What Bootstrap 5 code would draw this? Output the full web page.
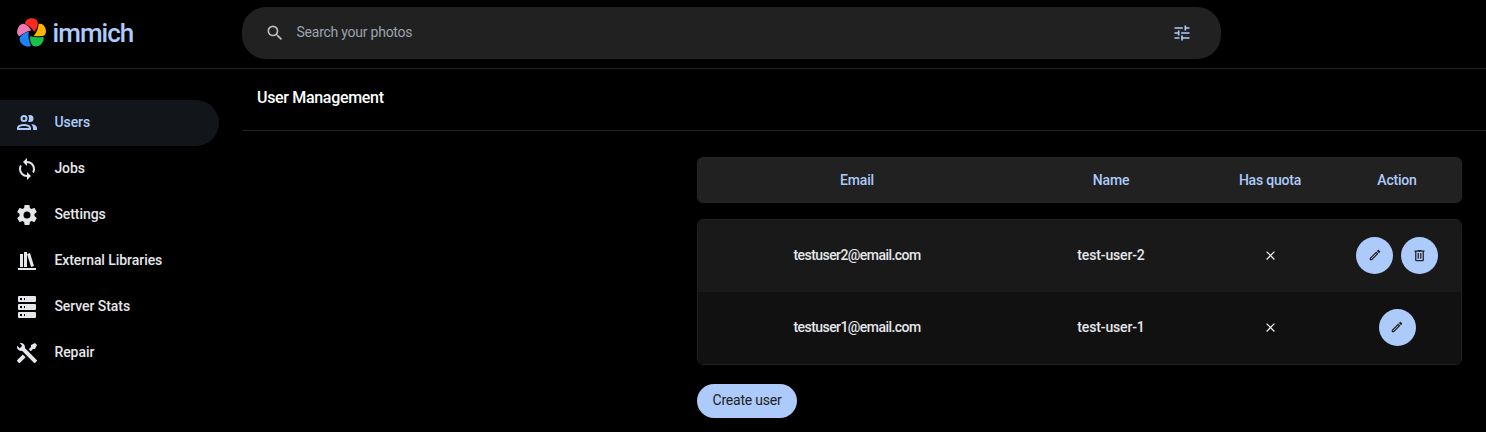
<!DOCTYPE html>
<html lang="en" data-bs-theme="dark">
<head>
<meta charset="utf-8">
<meta name="viewport" content="width=device-width, initial-scale=1">
<title>User Management - Immich</title>
<link rel="stylesheet" href="https://cdn.jsdelivr.net/npm/bootstrap@5.3.0/dist/css/bootstrap.min.css">
<style>
  body { background: #000; color: #e5e7eb; font-family: Roboto, "Liberation Sans", sans-serif; font-size: 14px; line-height: 20px; height: 432px; overflow: hidden; }
  svg { fill: currentColor; flex: none; display: block; }
  .topbar { height: 69px; border-bottom: 1px solid #212121; }
  .brand { width: 242px; padding: 0 0 3px 16px; color: #adcbfa; }
  .wordmark { font-size: 26px; line-height: 30px; font-weight: 500; letter-spacing: -.95px; margin-left: 5.5px; }
  .searchbox { width: 979px; height: 52px; margin-top: 7px; padding: 0 29px 0 23px; border-radius: 24px; background: #212121; color: #bdbdbd; }
  .searchbox .hint { color: #9ca3af; padding: 0 0 3px 11.5px; letter-spacing: -.24px; }
  .sidebar { width: 242px; padding: 31px 23px 0 0; }
  .side-item { height: 46px; padding: 0 0 0 15.4px; gap: 15px; border-radius: 0 23px 23px 0; color: #e5e7eb; font-weight: 500; text-decoration: none; letter-spacing: -.06px; }
  .side-item span { padding-bottom: 3px; }
  .side-item.current { background: #12161b; color: #adcbfa; }
  .page-title { height: 62px; padding: 0 15px 3px; border-bottom: 1px solid #212121; font-size: 16px; font-weight: 500; letter-spacing: -.32px; }
  .users { width: 765px; margin: 26px 24px 0 auto; }
  .users-row { display: grid; grid-template-columns: 318px 190px 128px 126px; align-items: center; justify-items: center; font-weight: 500; }
  .users-head { height: 46px; border: 1px solid #252525; border-radius: 6px; background: #212121; color: #adcbfa; padding-bottom: 1px; letter-spacing: -.2px; }
  .users-body { margin-top: 16px; border: 1px solid #212121; border-radius: 6px; overflow: hidden; }
  .users-body .users-row { height: 72px; padding-bottom: 2px; background: #191919; }
  .users-body .users-row + .users-row { background: #111; }
  .users-body span { padding-bottom: 1px; letter-spacing: -.15px; }
  .users-body span.email { letter-spacing: -.56px; }
  .round { width: 37px; height: 37px; padding: 0; color: #212121; background: #adcbfa; }
  .create { height: 34px; width: 100px; margin-top: 19px; padding: 0 0 2px; background: #adcbfa; color: #212121; font-size: 14px; line-height: 20px; border: 0; letter-spacing: -.22px; }
</style>
</head>
<body>
<header class="topbar d-flex">
  <div class="brand d-flex align-items-center">
    <svg width="31" height="31" viewBox="0 0 31 31">
      <path fill="#fa2921" d="M9.2 5.6C9.6 2.8 12.5 1.2 15.6 1.2S21.4 2.8 21.8 5.6C22 9 20.6 12.2 18.2 14.8C16.2 11.4 12.8 8.6 9.2 7.1Z"/>
      <path fill="#ffb400" d="M23.2 6.7C26 6.2 28.5 8.4 29.5 11.4S30 17.4 27.8 18.8C25 19.5 21 19.3 17.6 18.9C20.8 15.4 22.4 11 22.6 6.9Z"/>
      <path fill="#18c249" d="M14.2 19.2C18 20.4 23 20.6 27.3 19.7C28.5 22.3 26.9 25.8 24.5 27.7S18.6 30 16.6 28.4C14.4 26.3 13.7 22.5 14.2 19.2Z"/>
      <path fill="#1e83f7" d="M12.8 14.4C12 19.4 12.7 24.6 15 28.4C13.2 30.4 9.3 29.7 6.8 27.8S2.9 22.6 4 20.3C5.7 17.5 9 15.4 12.8 14.4Z"/>
      <path fill="#ed79b5" d="M15.2 13.6C10.8 14.4 6.6 16.6 3.6 19.3C1 18.2.6 15 1.6 12S4.9 6.4 7.9 6.8C11 7.7 13.8 10.4 15.2 13.6Z"/>
    </svg>
    <span class="wordmark">immich</span>
  </div>
  <div class="searchbox d-flex align-items-center">
    <svg width="20" height="20" viewBox="0 0 24 24"><path d="M9.5,3A6.5,6.5 0 0,1 16,9.5C16,11.11 15.41,12.59 14.44,13.73L14.71,14H15.5L20.5,19L19,20.5L14,15.5V14.71L13.73,14.44C12.59,15.41 11.11,16 9.5,16A6.5,6.5 0 0,1 3,9.5A6.5,6.5 0 0,1 9.5,3M9.5,5C7,5 5,7 5,9.5C5,12 7,14 9.5,14C12,14 14,12 14,9.5C14,7 12,5 9.5,5Z"/></svg>
    <span class="hint flex-grow-1">Search your photos</span>
    <svg width="20" height="20" viewBox="0 0 24 24" color="#adcbfa"><path d="M3,17V19H9V17H3M3,5V7H13V5H3M13,21V19H21V17H13V15H11V21H13M7,9V11H3V13H7V15H9V9H7M21,13V11H11V13H21M15,9H17V7H21V5H17V3H15V9Z"/></svg>
  </div>
</header>

<div class="d-flex">
  <nav class="sidebar d-flex flex-column flex-shrink-0">
    <a class="side-item current d-flex align-items-center" href="#">
      <svg width="24" height="24" viewBox="0 0 24 24"><path d="M13.07 10.41A5 5 0 0 0 13.07 4.59A3.39 3.39 0 0 1 15 4A3.5 3.5 0 0 1 15 11A3.39 3.39 0 0 1 13.07 10.41M5.5 7.5A3.5 3.5 0 1 1 9 11A3.5 3.5 0 0 1 5.5 7.5M7.5 7.5A1.5 1.5 0 1 0 9 6A1.5 1.5 0 0 0 7.5 7.5M16 17V19H2V17S2 13 9 13 16 17 16 17M14 17C13.86 16.22 12.67 15 9 15S4.07 16.31 4 17M15.95 13A5.32 5.32 0 0 1 18 17V19H22V17S22 13.37 15.94 13Z"/></svg>
      <span>Users</span>
    </a>
    <a class="side-item d-flex align-items-center" href="#">
      <svg width="24" height="24" viewBox="0 0 24 24"><path d="M12,18A6,6 0 0,1 6,12C6,11 6.25,10.03 6.7,9.2L5.24,7.74C4.46,8.97 4,10.43 4,12A8,8 0 0,0 12,20V23L16,19L12,15M12,4V1L8,5L12,9V6A6,6 0 0,1 18,12C18,13 17.75,13.97 17.3,14.8L18.76,16.26C19.54,15.03 20,13.57 20,12A8,8 0 0,0 12,4Z"/></svg>
      <span>Jobs</span>
    </a>
    <a class="side-item d-flex align-items-center" href="#">
      <svg width="24" height="24" viewBox="0 0 24 24"><path d="M12,15.5A3.5,3.5 0 0,1 8.5,12A3.5,3.5 0 0,1 12,8.5A3.5,3.5 0 0,1 15.5,12A3.5,3.5 0 0,1 12,15.5M19.43,12.97C19.47,12.65 19.5,12.33 19.5,12C19.5,11.67 19.47,11.34 19.43,11L21.54,9.37C21.73,9.22 21.78,8.95 21.66,8.73L19.66,5.27C19.54,5.05 19.27,4.96 19.05,5.05L16.56,6.05C16.04,5.66 15.5,5.32 14.87,5.07L14.5,2.42C14.46,2.18 14.25,2 14,2H10C9.75,2 9.54,2.18 9.5,2.42L9.13,5.07C8.5,5.32 7.96,5.66 7.44,6.05L4.95,5.05C4.73,4.96 4.46,5.05 4.34,5.27L2.34,8.73C2.21,8.95 2.27,9.22 2.46,9.37L4.57,11C4.53,11.34 4.5,11.67 4.5,12C4.5,12.33 4.53,12.65 4.57,12.97L2.46,14.63C2.27,14.78 2.21,15.05 2.34,15.27L4.34,18.73C4.46,18.95 4.73,19.03 4.95,18.95L7.44,17.94C7.96,18.34 8.5,18.68 9.13,18.93L9.5,21.58C9.54,21.82 9.75,22 10,22H14C14.25,22 14.46,21.82 14.5,21.58L14.87,18.93C15.5,18.67 16.04,18.34 16.56,17.94L19.05,18.95C19.27,19.03 19.54,18.95 19.66,18.73L21.66,15.27C21.78,15.05 21.73,14.78 21.54,14.63L19.43,12.97Z"/></svg>
      <span>Settings</span>
    </a>
    <a class="side-item d-flex align-items-center" href="#">
      <svg width="24" height="24" viewBox="0 0 24 24"><path d="M9 3V18H12V3H9M12 5L16 18L19 17L15 4L12 5M5 5V18H8V5H5M3 19V21H21V19H3Z"/></svg>
      <span>External Libraries</span>
    </a>
    <a class="side-item d-flex align-items-center" href="#">
      <svg width="24" height="24" viewBox="0 0 24 24"><path d="M4,1H20A1,1 0 0,1 21,2V6A1,1 0 0,1 20,7H4A1,1 0 0,1 3,6V2A1,1 0 0,1 4,1M4,9H20A1,1 0 0,1 21,10V14A1,1 0 0,1 20,15H4A1,1 0 0,1 3,14V10A1,1 0 0,1 4,9M4,17H20A1,1 0 0,1 21,18V22A1,1 0 0,1 20,23H4A1,1 0 0,1 3,22V18A1,1 0 0,1 4,17M9,5H10V3H9V5M9,13H10V11H9V13M9,21H10V19H9V21M5,3V5H7V3H5M5,11V13H7V11H5M5,19V21H7V19H5Z"/></svg>
      <span>Server Stats</span>
    </a>
    <a class="side-item d-flex align-items-center" href="#">
      <svg width="24" height="24" viewBox="0 0 24 24"><path d="M21.71 20.29L20.29 21.71A1 1 0 0 1 18.88 21.71L7 9.85A3.81 3.81 0 0 1 6 10A4 4 0 0 1 2.22 4.7L4.76 7.24L5.29 6.71L6.71 5.29L7.24 4.76L4.7 2.22A4 4 0 0 1 10 6A3.81 3.81 0 0 1 9.85 7L21.71 18.88A1 1 0 0 1 21.71 20.29M2.29 18.88A1 1 0 0 0 2.29 20.29L3.71 21.71A1 1 0 0 0 5.12 21.71L10.59 16.25L7.76 13.42M20 2L16 4V6L13.83 8.17L15.83 10.17L18 8H20L22 4Z"/></svg>
      <span>Repair</span>
    </a>
  </nav>

  <main class="flex-grow-1">
    <h1 class="page-title d-flex align-items-center m-0">User Management</h1>
    <section class="users">
      <div class="users-row users-head">
        <div>Email</div><div>Name</div><div>Has quota</div><div>Action</div>
      </div>
      <div class="users-body">
        <div class="users-row">
          <span class="email">testuser2@email.com</span>
          <span>test-user-2</span>
          <svg width="15" height="15" viewBox="0 0 24 24"><path d="M19,6.41L17.59,5L12,10.59L6.41,5L5,6.41L10.59,12L5,17.59L6.41,19L12,13.41L17.59,19L19,17.59L13.41,12L19,6.41Z"/></svg>
          <div class="d-flex gap-2">
            <button class="btn round rounded-circle d-flex align-items-center justify-content-center" aria-label="Edit user"><svg width="14" height="14" viewBox="0 0 24 24"><path d="M14.06,9L15,9.94L5.92,19H5V18.08L14.06,9M17.66,3C17.41,3 17.15,3.1 16.96,3.29L15.13,5.12L18.88,8.87L20.71,7.04C21.1,6.65 21.1,6 20.71,5.63L18.37,3.29C18.17,3.09 17.92,3 17.66,3M14.06,6.19L3,17.25V21H6.75L17.81,9.94L14.06,6.19Z"/></svg></button>
            <button class="btn round rounded-circle d-flex align-items-center justify-content-center" aria-label="Delete user"><svg width="15" height="15" viewBox="0 0 24 24"><path d="M9,3V4H4V6H5V19A2,2 0 0,0 7,21H17A2,2 0 0,0 19,19V6H20V4H15V3H9M7,6H17V19H7V6M9,8V17H11V8H9M13,8V17H15V8H13Z"/></svg></button>
          </div>
        </div>
        <div class="users-row">
          <span class="email">testuser1@email.com</span>
          <span>test-user-1</span>
          <svg width="15" height="15" viewBox="0 0 24 24"><path d="M19,6.41L17.59,5L12,10.59L6.41,5L5,6.41L10.59,12L5,17.59L6.41,19L12,13.41L17.59,19L19,17.59L13.41,12L19,6.41Z"/></svg>
          <button class="btn round rounded-circle d-flex align-items-center justify-content-center" aria-label="Edit user"><svg width="14" height="14" viewBox="0 0 24 24"><path d="M14.06,9L15,9.94L5.92,19H5V18.08L14.06,9M17.66,3C17.41,3 17.15,3.1 16.96,3.29L15.13,5.12L18.88,8.87L20.71,7.04C21.1,6.65 21.1,6 20.71,5.63L18.37,3.29C18.17,3.09 17.92,3 17.66,3M14.06,6.19L3,17.25V21H6.75L17.81,9.94L14.06,6.19Z"/></svg></button>
        </div>
      </div>
      <button class="btn create rounded-pill">Create user</button>
    </section>
  </main>
</div>
<script src="https://cdn.jsdelivr.net/npm/bootstrap@5.3.0/dist/js/bootstrap.bundle.min.js"></script>
</body>
</html>
